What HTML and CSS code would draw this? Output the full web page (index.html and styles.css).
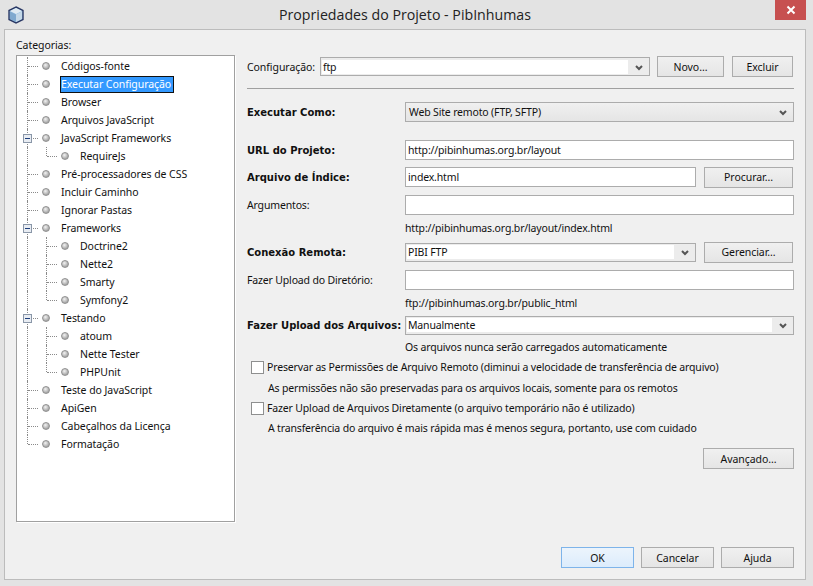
FILE: index.html
```html
<!DOCTYPE html>
<html lang="pt">
    <head>
        <meta charset="UTF-8">
        <title>Propriedades do Projeto - PibInhumas</title>
        <link rel="stylesheet" href="styles.css">
    </head>
    <body>
        <div class="janela">
            <div class="titulo">
                <svg class="icone" width="16" height="18" viewBox="0 0 16 18">
                    <path d="M8 1 L15 4.5 V13.5 L8 17 L1 13.5 V4.5 Z" fill="#9cc4e4" stroke="#2c3a66" stroke-width="1.4"/>
                    <path d="M2 5 L8 2 L14 5 L8 8 Z" fill="#dfeaf2"/>
                    <path d="M2 5.5 L8 8.5 V16 L2 13 Z" fill="#7fa9cf"/>
                    <path d="M8 8.5 L14 5.5 V13 L8 16 Z" fill="#c4d8e8"/>
                </svg>
                <span class="titulo_texto">Propriedades do Projeto - PibInhumas</span>
                <div class="fechar">
                    <svg width="10" height="10" viewBox="0 0 10 10"><path d="M1.5 1.5 L8.5 8.5 M8.5 1.5 L1.5 8.5" stroke="#fff" stroke-width="2"/></svg>
                </div>
            </div>
            <div class="painel">
                <div class="corpo">
                    <div class="esquerda">
                        <div class="categorias">Categorias:</div>
                        <div class="arvore">
                            <div class="no"><i class="linha"></i><i class="bola"></i><span>Códigos-fonte</span></div>
                            <div class="no"><i class="linha"></i><i class="bola"></i><span class="selecionado">Executar Configuração</span></div>
                            <div class="no"><i class="linha"></i><i class="bola"></i><span>Browser</span></div>
                            <div class="no"><i class="linha"></i><i class="bola"></i><span>Arquivos JavaScript</span></div>
                            <div class="no"><i class="linha"><b class="menos"></b></i><i class="bola"></i><span>JavaScript Frameworks</span></div>
                            <div class="no"><i class="via"></i><i class="linha fim"></i><i class="bola"></i><span>RequireJs</span></div>
                            <div class="no"><i class="linha"></i><i class="bola"></i><span>Pré-processadores de CSS</span></div>
                            <div class="no"><i class="linha"></i><i class="bola"></i><span>Incluir Caminho</span></div>
                            <div class="no"><i class="linha"></i><i class="bola"></i><span>Ignorar Pastas</span></div>
                            <div class="no"><i class="linha"><b class="menos"></b></i><i class="bola"></i><span>Frameworks</span></div>
                            <div class="no"><i class="via"></i><i class="linha"></i><i class="bola"></i><span>Doctrine2</span></div>
                            <div class="no"><i class="via"></i><i class="linha"></i><i class="bola"></i><span>Nette2</span></div>
                            <div class="no"><i class="via"></i><i class="linha"></i><i class="bola"></i><span>Smarty</span></div>
                            <div class="no"><i class="via"></i><i class="linha fim"></i><i class="bola"></i><span>Symfony2</span></div>
                            <div class="no"><i class="linha"><b class="menos"></b></i><i class="bola"></i><span>Testando</span></div>
                            <div class="no"><i class="via"></i><i class="linha"></i><i class="bola"></i><span>atoum</span></div>
                            <div class="no"><i class="via"></i><i class="linha"></i><i class="bola"></i><span>Nette Tester</span></div>
                            <div class="no"><i class="via"></i><i class="linha fim"></i><i class="bola"></i><span>PHPUnit</span></div>
                            <div class="no"><i class="linha"></i><i class="bola"></i><span>Teste do JavaScript</span></div>
                            <div class="no"><i class="linha"></i><i class="bola"></i><span>ApiGen</span></div>
                            <div class="no"><i class="linha"></i><i class="bola"></i><span>Cabeçalhos da Licença</span></div>
                            <div class="no"><i class="linha fim"></i><i class="bola"></i><span>Formatação</span></div>
                        </div>
                    </div>
                    <div class="direita">
                        <div class="linha_config">
                            <span class="rotulo_config">Configuração:</span>
                            <div class="combo combo_config"><div class="valor">ftp</div><svg class="seta" width="8" height="6" viewBox="0 0 8 6"><path d="M1 1 L4 4 L7 1" fill="none" stroke="#555" stroke-width="2"/></svg></div>
                            <button class="btn btn_novo">Novo...</button>
                            <button class="btn btn_excluir">Excluir</button>
                        </div>
                        <div class="separador"></div>
                        <div class="campo r_como">
                            <label class="forte">Executar Como:</label>
                            <div class="combo combo_cinza"><div class="valor">Web Site remoto (FTP, SFTP)</div><svg class="seta" width="8" height="6" viewBox="0 0 8 6"><path d="M1 1 L4 4 L7 1" fill="none" stroke="#555" stroke-width="2"/></svg></div>
                        </div>
                        <div class="campo r_url">
                            <label class="forte">URL do Projeto:</label>
                            <div class="entrada">http://pibinhumas.org.br/layout</div>
                        </div>
                        <div class="campo r_indice">
                            <label class="forte">Arquivo de Índice:</label>
                            <div class="entrada">index.html</div>
                            <button class="btn btn_lado">Procurar...</button>
                        </div>
                        <div class="campo r_arg">
                            <label>Argumentos:</label>
                            <div class="entrada"></div>
                        </div>
                        <div class="nota r_nota1">http://pibinhumas.org.br/layout/index.html</div>
                        <div class="campo r_conexao">
                            <label class="forte">Conexão Remota:</label>
                            <div class="combo combo_curto"><div class="valor">PIBI FTP</div><svg class="seta" width="8" height="6" viewBox="0 0 8 6"><path d="M1 1 L4 4 L7 1" fill="none" stroke="#555" stroke-width="2"/></svg></div>
                            <button class="btn btn_lado">Gerenciar...</button>
                        </div>
                        <div class="campo r_dir">
                            <label>Fazer Upload do Diretório:</label>
                            <div class="entrada"></div>
                        </div>
                        <div class="nota r_nota2">ftp://pibinhumas.org.br/public_html</div>
                        <div class="campo r_upload">
                            <label class="forte">Fazer Upload dos Arquivos:</label>
                            <div class="combo combo_curto"><div class="valor">Manualmente</div><svg class="seta" width="8" height="6" viewBox="0 0 8 6"><path d="M1 1 L4 4 L7 1" fill="none" stroke="#555" stroke-width="2"/></svg></div>
                        </div>
                        <div class="nota r_nota3">Os arquivos nunca serão carregados automaticamente</div>
                        <div class="marcar r_marca1"><i class="caixa"></i>Preservar as Permissões de Arquivo Remoto (diminui a velocidade de transferência de arquivo)</div>
                        <div class="sub r_sub1">As permissões não são preservadas para os arquivos locais, somente para os remotos</div>
                        <div class="marcar r_marca2"><i class="caixa"></i>Fazer Upload de Arquivos Diretamente (o arquivo temporário não é utilizado)</div>
                        <div class="sub r_sub2">A transferência do arquivo é mais rápida mas é menos segura, portanto, use com cuidado</div>
                        <div class="r_avancado"><button class="btn btn_avancado">Avançado...</button></div>
                    </div>
                </div>
                <div class="rodape">
                    <button class="btn btn_ok">OK</button>
                    <button class="btn btn_rodape">Cancelar</button>
                    <button class="btn btn_rodape">Ajuda</button>
                </div>
            </div>
        </div>
    </body>
</html>
```

FILE: styles.css
```css
html,body{margin:0;padding:0;}
body{width:813px;height:586px;overflow:hidden;background-color:#e3e3e3;font-family:"Noto Sans","Liberation Sans",sans-serif;font-size:10.5px;letter-spacing:-0.06px;color:#111;}
.janela{height:586px;display:flex;flex-direction:column;}
/* barra de titulo */
.titulo{height:29px;display:flex;position:relative;justify-content:center;}
.titulo_texto{font-family:"Open Sans",sans-serif;font-size:14.2px;letter-spacing:0;line-height:30px;color:#222;padding-right:3px;}
.icone{position:absolute;left:8px;top:6px;}
.fechar{position:absolute;left:775px;top:0;width:31px;height:20px;background-color:#c75050;display:flex;align-items:center;justify-content:center;}
/* painel */
.painel{margin-left:4px;width:800px;height:549px;border:1px solid #bcbcbc;background-color:#f0f0f0;display:flex;flex-direction:column;}
.corpo{display:flex;flex:1;}
.esquerda{width:219px;margin-left:11px;}
.categorias{height:25px;line-height:30px;}
.arvore{height:464px;border:1px solid #a0a0a0;background-color:white;box-shadow:1px 1px 0 white;padding-top:1px;}
/* arvore */
.no{display:flex;height:18px;align-items:center;padding-left:10px;}
.linha{position:relative;width:10px;height:18px;border-left:1px dotted #8a8a8a;box-sizing:content-box;flex:none;}
.linha::after{content:"";position:absolute;left:0;top:9px;width:10px;border-top:1px dotted #8a8a8a;}
.linha.fim{height:9px;align-self:flex-start;}
.via{width:18px;height:18px;border-left:1px dotted #8a8a8a;flex:none;}
.menos{position:absolute;left:-5px;top:5px;width:7px;height:7px;border:1px solid #8a97a8;background-color:#e8ecf2;z-index:1;}
.menos::after{content:"";position:absolute;left:1px;top:3px;width:5px;height:1px;background-color:#1c3d7a;}
.bola{width:6px;height:6px;border-radius:50%;background:radial-gradient(circle at 40% 35%,#f2f2f2,#a8a8a8 70%);border:1px solid #909090;margin:0 11px 0 4px;flex:none;}
.no span{padding:0 2px 0 0;line-height:15px;border:1px solid transparent;margin-left:-1px;white-space:nowrap;}
.selecionado{background-color:#3399ff;color:white;border-color:#111 !important;}
/* direita */
.direita{width:547px;margin-left:12px;padding-top:26px;letter-spacing:-0.16px;}
.linha_config{display:flex;align-items:center;height:21px;}
.rotulo_config{width:73px;flex:none;letter-spacing:-0.06px;}
.btn{font-family:inherit;font-size:10.5px;letter-spacing:-0.06px;color:#111;padding:0;border:1px solid #acacac;background:linear-gradient(#f0f0f0,#e5e5e5);height:21px;flex:none;}
.btn_novo{width:67px;margin-left:7px;}
.btn_excluir{width:61px;margin-left:8px;}
.combo{display:flex;align-items:center;border:1px solid #acacac;background-color:#ececec;box-sizing:border-box;flex:none;}
.combo .valor{background-color:white;height:14px;line-height:14px;padding-left:1px;flex:1;margin-left:1px;}
.combo .seta{margin:2px 6px 0 7px;flex:none;}
.combo_config{width:330px;height:19px;}
.combo_cinza{width:389px;height:20px;background:linear-gradient(#f0f0f0,#e5e5e5);}
.combo_cinza .valor{background:none;padding-left:2px;}
.combo_curto{width:291px;height:19px;}
.r_upload .combo_curto{width:389px;}
.separador{height:1px;background-color:#a0a0a0;margin-top:11px;}
.campo{display:flex;align-items:center;height:20px;}
.campo label{width:158px;flex:none;white-space:nowrap;}
.forte{font-family:"DejaVu Sans",sans-serif;font-size:10px;font-weight:bold;letter-spacing:0;}
.entrada{flex:1;height:20px;box-sizing:border-box;border:1px solid #acacac;background-color:white;line-height:18px;padding-left:2px;}
.btn_lado{width:89px;margin-left:8px;}
.r_indice .entrada{flex:none;width:291px;}
.nota{padding-left:158px;height:14px;line-height:14px;}
.marcar{display:flex;align-items:center;height:14px;padding-left:4px;}
.caixa{width:11px;height:11px;border:1px solid #8e8f8f;background-color:white;margin-right:3px;flex:none;}
.sub{padding-left:21px;height:14px;line-height:14px;}
.r_como{margin-top:13px;}
.r_url{margin-top:18px;}
.r_indice{margin-top:7px;}
.r_arg{margin-top:8px;}
.r_nota1{margin-top:6px;}
.r_conexao{margin-top:7px;}
.r_dir{margin-top:8px;}
.r_nota2{margin-top:6px;}
.r_upload{margin-top:5px;}
.r_nota3{margin-top:5px;}
.r_marca1{margin-top:6px;}
.r_sub1{margin-top:7px;}
.r_marca2{margin-top:6px;}
.r_sub2{margin-top:6px;}
.r_avancado{display:flex;justify-content:flex-end;margin-top:13px;}
.btn_avancado{width:91px;}
/* botoes de baixo */
.rodape{display:flex;justify-content:flex-end;gap:7px;padding-right:11px;padding-bottom:11px;}
.btn_ok{width:73px;border-color:#7eb4ea;background:linear-gradient(#ecf4fc,#dcecfc);}
.btn_rodape{width:73px;}
```
